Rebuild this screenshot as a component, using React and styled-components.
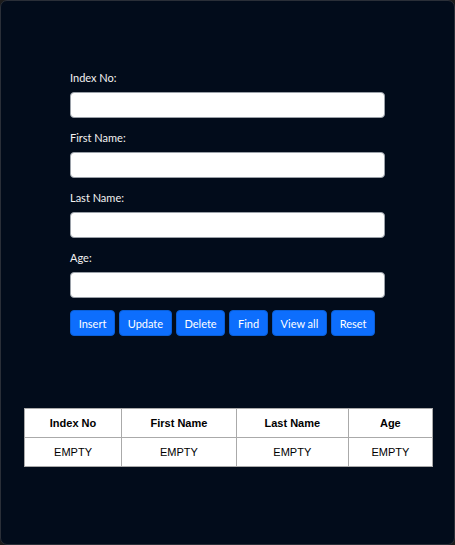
import React from "react";
import styled, { createGlobalStyle } from "styled-components";

const GlobalStyle = createGlobalStyle`
  html, body {
    margin: 0;
    padding: 0;
    background: #1c1c1c;
  }
`;

const Card = styled.div`
  box-sizing: border-box;
  width: 455px;
  height: 545px;
  background: #020c1b;
  border: 1px solid #2a2f38;
  border-radius: 7px;
  padding-top: 69px;
  font-family: Lato, "Open Sans", sans-serif;
`;

const Form = styled.form`
  width: 315px;
  margin-left: 69px;
  display: flex;
  flex-direction: column;
`;

const Field = styled.div`
  display: flex;
  flex-direction: column;
  margin-bottom: 12px;
`;

const Label = styled.label`
  color: #f2f2f2;
  font-size: 11px;
  line-height: 15px;
  margin-bottom: 7px;
`;

const Input = styled.input`
  box-sizing: border-box;
  height: 26px;
  width: 100%;
  border: 1px solid #9aa0a8;
  border-radius: 4px;
  background: #fff;
  outline: none;
`;

const Buttons = styled.div`
  display: flex;
  gap: 4px;
`;

const Button = styled.button`
  height: 26px;
  padding: 0 7.7px;
  border: 1px solid #0a5fd8;
  border-radius: 4px;
  background: #0d6efd;
  color: #fff;
  font-family: Lato, "Open Sans", sans-serif;
  font-size: 11px;
  white-space: nowrap;
`;

const Table = styled.table`
  margin: 72px 0 0 23px;
  width: 409px;
  border-collapse: collapse;
  background: #fff;
  font-family: "Liberation Sans", Arial, sans-serif;
  font-size: 11px;
  color: #000;
`;

const Th = styled.th`
  height: 28px;
  padding: 0;
  border: 1px solid #aaa;
  font-weight: bold;
  width: ${(p) => p.w}px;
`;

const Td = styled.td`
  height: 28px;
  padding: 0;
  border: 1px solid #aaa;
  text-align: center;
`;

const fields = ["Index No:", "First Name:", "Last Name:", "Age:"];
const actions = ["Insert", "Update", "Delete", "Find", "View all", "Reset"];
const columns = [
  { name: "Index No", w: 97 },
  { name: "First Name", w: 115 },
  { name: "Last Name", w: 112 },
  { name: "Age", w: 84 },
];

export default function App() {
  return (
    <>
      <GlobalStyle />
      <Card>
        <Form onSubmit={(e) => e.preventDefault()}>
          {fields.map((f) => (
            <Field key={f}>
              <Label>{f}</Label>
              <Input type="text" />
            </Field>
          ))}
          <Buttons>
            {actions.map((a) => (
              <Button key={a} type="button">
                {a}
              </Button>
            ))}
          </Buttons>
        </Form>
        <Table>
          <thead>
            <tr>
              {columns.map((c) => (
                <Th key={c.name} w={c.w}>
                  {c.name}
                </Th>
              ))}
            </tr>
          </thead>
          <tbody>
            <tr>
              {columns.map((c) => (
                <Td key={c.name}>EMPTY</Td>
              ))}
            </tr>
          </tbody>
        </Table>
      </Card>
    </>
  );
}
